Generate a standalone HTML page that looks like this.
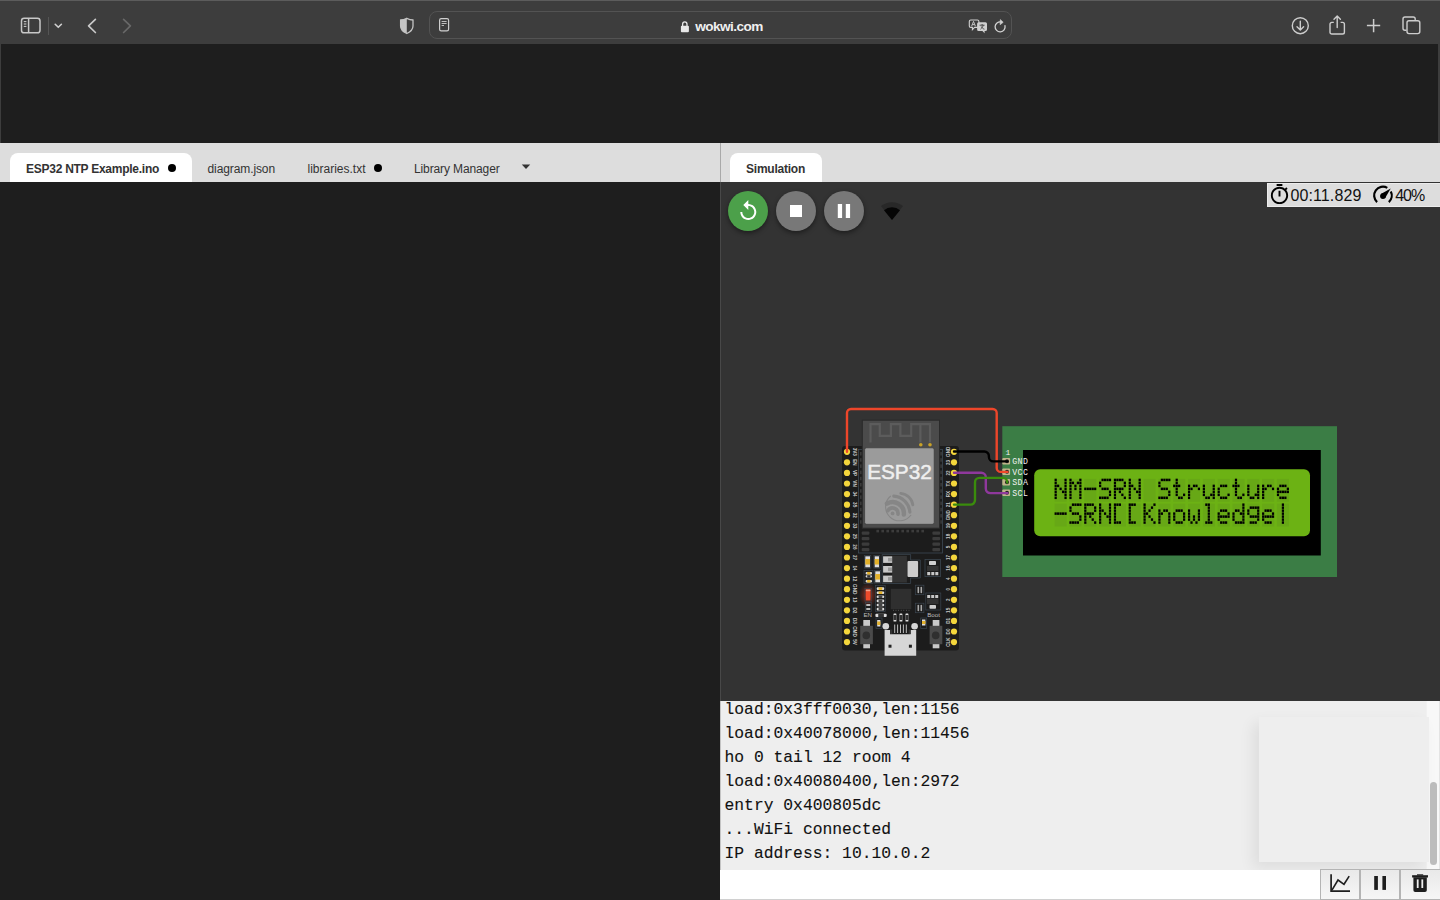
<!DOCTYPE html>
<html><head><meta charset="utf-8">
<style>
*{box-sizing:border-box;margin:0;padding:0}
html,body{width:1440px;height:900px;overflow:hidden;background:#1e1e1e;font-family:"Liberation Sans",sans-serif}
.abs{position:absolute}
#toolbar{position:absolute;left:0;top:0;width:1440px;height:44px;background:#3d3d3d}
#topline{position:absolute;left:0;top:0;width:1440px;height:1px;background:#5c5c5c}
#dark1{position:absolute;left:1px;top:44px;width:1437px;height:99px;background:#1e1e1e}
#dark1l{position:absolute;left:0;top:44px;width:1px;height:99px;background:#3d3d3d}
#dark1r{position:absolute;left:1438px;top:44px;width:2px;height:99px;background:#3d3d3d}
#tabbar{position:absolute;left:0;top:143px;width:1440px;height:39px;background:#dddddd}
.tab{position:absolute;top:10px;height:29px;background:#fff;border-radius:8px 8px 0 0}
.tt{position:absolute;font-size:12px;color:#333;white-space:nowrap;line-height:14px}
.dot{position:absolute;width:8px;height:8px;border-radius:50%;background:#000}
#editor{position:absolute;left:0;top:182px;width:720px;height:718px;background:#1e1e1e}
#sim{position:absolute;left:720px;top:182px;width:720px;height:519px;background:#333333;overflow:hidden}
#serial{position:absolute;left:720px;top:701px;width:720px;height:169px;background:#eeeeee;overflow:hidden}
#serial pre{font-family:"Liberation Mono",monospace;font-size:16.33px;line-height:24px;color:#111;-webkit-text-stroke:0.1px #111;position:absolute;left:4.5px;top:-3px}
#input{position:absolute;left:720px;top:870px;width:720px;height:30px;background:#fff}
.btn{position:absolute;top:0;width:40px;height:31px;background:linear-gradient(#e9e9e9,#f6f6f6);border:1px solid #b4b4b4}
.cb{position:absolute;width:40px;height:40px;border-radius:50%;box-shadow:0 2px 5px rgba(0,0,0,.45)}
#timer{position:absolute;left:1267px;top:183px;width:173px;height:24px;background:#dddddd;border:1px solid #ececec;border-right:none}
.ticon{position:absolute}
</style></head><body>
<div id="toolbar"></div>
<div id="topline"></div>
<!-- toolbar icons -->
<svg class="abs" style="left:0;top:0" width="1440" height="44" viewBox="0 0 1440 44">
  <g fill="none" stroke="#c8c8c8" stroke-width="1.5">
    <rect x="21.5" y="18.3" width="18.5" height="14.5" rx="2.6"/>
    <line x1="28.6" y1="18.5" x2="28.6" y2="32.5"/>
  </g>
  <g stroke="#c8c8c8" stroke-width="1.1"><line x1="23.8" y1="21.6" x2="26.4" y2="21.6"/><line x1="23.8" y1="24" x2="26.4" y2="24"/><line x1="23.8" y1="26.4" x2="26.4" y2="26.4"/></g>
  <line x1="48.5" y1="17" x2="48.5" y2="35" stroke="#555" stroke-width="1"/>
  <path d="M55.2 24.3L58.3 27.3L61.4 24.3" fill="none" stroke="#d0d0d0" stroke-width="1.6" stroke-linecap="round" stroke-linejoin="round"/>
  <path d="M95.4 19.4L88.6 25.9L95.4 32.5" fill="none" stroke="#c9c9c9" stroke-width="1.7" stroke-linecap="round" stroke-linejoin="round"/>
  <path d="M123.6 19.4L130.4 25.9L123.6 32.5" fill="none" stroke="#686868" stroke-width="1.7" stroke-linecap="round" stroke-linejoin="round"/>
  <!-- shield -->
  <path d="M406.8 18.3C409 19.4 411 19.9 413 20V26C413 29.5 410.5 31.8 406.8 33.5C403 31.8 400.6 29.5 400.6 26V20C402.6 19.9 404.6 19.4 406.8 18.3Z" fill="none" stroke="#c4c4c4" stroke-width="1.3"/>
  <path d="M406.8 18.3C404.6 19.4 402.6 19.9 400.6 20V26C400.6 29.5 403 31.8 406.8 33.5Z" fill="#c4c4c4"/>
  <!-- address bar -->
  <rect x="429.5" y="11.5" width="582" height="27" rx="7.5" fill="#3d3d3d" stroke="#535353" stroke-width="1"/>
  <rect x="439.6" y="18.6" width="9" height="12.2" rx="1.6" fill="none" stroke="#cfcfcf" stroke-width="1.2"/>
  <g stroke="#cfcfcf" stroke-width="0.9"><line x1="441.6" y1="21.5" x2="446.6" y2="21.5"/><line x1="441.6" y1="23.5" x2="446.6" y2="23.5"/><line x1="441.6" y1="25.5" x2="444" y2="25.5"/></g>
  <!-- lock -->
  <path d="M682.6 26.3V24.2A2.2 2.4 0 0 1 687 24.2V26.3" fill="none" stroke="#e8e8e8" stroke-width="1.3"/>
  <rect x="680.9" y="25.8" width="8" height="6.4" rx="1" fill="#e8e8e8"/>
  <text x="695.3" y="31.1" font-family="Liberation Sans" font-size="13.6" font-weight="bold" fill="#f0f0f0" letter-spacing="-0.55">wokwi.com</text>
  <!-- translate -->
  <path d="M970.8 20H977.4A1.5 1.5 0 0 1 978.9 21.5V25.9A1.5 1.5 0 0 1 977.4 27.4H974.6L972.4 29.6V27.4H970.8A1.5 1.5 0 0 1 969.3 25.9V21.5A1.5 1.5 0 0 1 970.8 20Z" fill="none" stroke="#d0d0d0" stroke-width="1.1"/>
  <path d="M978.6 22.3H985.5A1.5 1.5 0 0 1 987 23.8V29.5A1.5 1.5 0 0 1 985.5 31H984.6V33.2L982.4 31H978.6A1.5 1.5 0 0 1 977.1 29.5V23.8A1.5 1.5 0 0 1 978.6 22.3Z" fill="#d0d0d0"/>
  <path d="M971.6 26.2L973.5 21.4L975.4 26.2M972.3 24.6H974.7" fill="none" stroke="#d0d0d0" stroke-width="0.9"/>
  <path d="M979.6 25.2H984.6M982.1 24V25.2M980.5 29.2C982 28 983 26.5 983.2 25.2M981.3 26.5C982 28 983 28.8 984.4 29.2" fill="none" stroke="#3d3d3d" stroke-width="0.9"/>
  <!-- reload -->
  <path d="M1000.97 21.88A5 5 0 1 0 1004.99 25.76" fill="none" stroke="#d2d2d2" stroke-width="1.3" stroke-linecap="round"/>
  <path d="M1000.3 19.6L1003.2 22.3L1000.1 24.7Z" fill="#d2d2d2" stroke="#d2d2d2" stroke-width="0.6" stroke-linejoin="round"/>
  <!-- download -->
  <circle cx="1300.3" cy="25.7" r="8" fill="none" stroke="#cdcdcd" stroke-width="1.4"/>
  <path d="M1300.3 21.3V29.8M1297 26.7L1300.3 30L1303.6 26.7" fill="none" stroke="#cdcdcd" stroke-width="1.4" stroke-linecap="round" stroke-linejoin="round"/>
  <!-- share -->
  <path d="M1333.8 22.4H1331.8A1.8 1.8 0 0 0 1330 24.2V32.2A1.8 1.8 0 0 0 1331.8 34H1342.6A1.8 1.8 0 0 0 1344.4 32.2V24.2A1.8 1.8 0 0 0 1342.6 22.4H1340.6" fill="none" stroke="#cdcdcd" stroke-width="1.4"/>
  <path d="M1337.2 16.2V27.6M1334 19.2L1337.2 16L1340.4 19.2" fill="none" stroke="#cdcdcd" stroke-width="1.4" stroke-linecap="round" stroke-linejoin="round"/>
  <!-- plus -->
  <path d="M1373.6 18.9V32.2M1366.9 25.5H1380.2" stroke="#cdcdcd" stroke-width="1.5"/>
  <!-- tabs -->
  <path d="M1406.5 30.2H1405A2 2 0 0 1 1403 28.2V19A2 2 0 0 1 1405 17H1413.2A2 2 0 0 1 1415.2 19V20.5" fill="none" stroke="#cdcdcd" stroke-width="1.4"/>
  <rect x="1407" y="20.8" width="12.8" height="12.8" rx="2" fill="none" stroke="#cdcdcd" stroke-width="1.4"/>
</svg>
<div id="dark1"></div><div id="dark1l"></div><div id="dark1r"></div>
<div id="tabbar">
  <div class="tab" style="left:10px;width:182px"></div>
  <div class="tt" style="left:26px;top:19px;font-weight:bold;letter-spacing:-0.26px">ESP32 NTP Example.ino</div>
  <div class="dot" style="left:168px;top:21px"></div>
  <div class="tt" style="left:207.5px;top:19px;letter-spacing:-0.1px">diagram.json</div>
  <div class="tt" style="left:307.5px;top:19px">libraries.txt</div>
  <div class="dot" style="left:374px;top:21px"></div>
  <div class="tt" style="left:414px;top:19px;letter-spacing:-0.12px">Library Manager</div>
  <svg class="abs" style="left:520px;top:20px" width="12" height="8"><path d="M1.8 1.5H10.2L6 6Z" fill="#333"/></svg>
  <div class="abs" style="left:720px;top:0;width:1px;height:39px;background:#a9a9a9"></div>
  <div class="tab" style="left:730px;width:92px"></div>
  <div class="tt" style="left:746px;top:19px;font-weight:bold;letter-spacing:-0.23px">Simulation</div>
</div>
<div id="editor"></div>
<div id="sim">
  <div class="abs" style="left:0;top:0;width:1px;height:519px;background:#484848"></div>
  <div class="cb" style="left:8px;top:9px;background:#4ca04a"></div>
  <div class="cb" style="left:56px;top:9px;background:#787878"></div>
  <div class="cb" style="left:104px;top:9px;background:#787878"></div>
</div>
<svg class="abs" style="left:0;top:0" width="1440" height="900" viewBox="0 0 1440 900">
  <defs><radialGradient id="glow"><stop offset="0" stop-color="#ff3a1a" stop-opacity="0.75"/><stop offset="0.55" stop-color="#ff3a1a" stop-opacity="0.25"/><stop offset="1" stop-color="#ff3a1a" stop-opacity="0"/></radialGradient></defs>
  <!-- restart icon -->
  <g transform="translate(736 199)"><path d="M12 5V1L7 6l5 5V7c3.31 0 6 2.69 6 6s-2.69 6-6 6-6-2.69-6-6H4c0 4.42 3.58 8 8 8s8-3.58 8-8-3.58-8-8-8z" fill="#fff" transform="translate(0.3 0) scale(1)"/></g>
  <rect x="790" y="205" width="12" height="12" fill="#fff"/>
  <rect x="837.8" y="204" width="4.3" height="14" fill="#fff"/>
  <rect x="845.8" y="204" width="4.3" height="14" fill="#fff"/>
  <!-- wifi -->
  <path d="M881 206A17.8 17.8 0 0 1 903 206L892 220Z" fill="#282828"/>
  <path d="M884 210.3A11.9 11.9 0 0 1 900 210.3L892 220Z" fill="#050505"/>
  <rect x="842" y="446" width="117" height="204.5" rx="3" fill="#1c1c1c"/>
<rect x="858.5" y="449.5" width="84" height="103.5" fill="none" stroke="#3d4a55" stroke-width="0.8"/>
<rect x="862.3" y="420.2" width="77.2" height="108" fill="#4b4b4b" stroke="#2a2a2a" stroke-width="1"/>
<path d="M870.5 442.5V424.2H879.8V435.9H890.9V424.2H900.4V435.9H911.2V424.2H930V442.5M920.4 424.2V442.5" fill="none" stroke="#5c5c5c" stroke-width="2.2"/>
<circle cx="920.8" cy="444.7" r="1.8" fill="#c9a227"/><circle cx="930" cy="444.7" r="1.8" fill="#c9a227"/>
<rect x="860" y="452.0" width="1.6" height="3.5" fill="#3a3a3a"/>
<rect x="940.3" y="452.0" width="1.6" height="3.5" fill="#3a3a3a"/>
<rect x="860" y="458.2" width="1.6" height="3.5" fill="#3a3a3a"/>
<rect x="940.3" y="458.2" width="1.6" height="3.5" fill="#3a3a3a"/>
<rect x="860" y="464.4" width="1.6" height="3.5" fill="#3a3a3a"/>
<rect x="940.3" y="464.4" width="1.6" height="3.5" fill="#3a3a3a"/>
<rect x="860" y="470.6" width="1.6" height="3.5" fill="#3a3a3a"/>
<rect x="940.3" y="470.6" width="1.6" height="3.5" fill="#3a3a3a"/>
<rect x="860" y="476.8" width="1.6" height="3.5" fill="#3a3a3a"/>
<rect x="940.3" y="476.8" width="1.6" height="3.5" fill="#3a3a3a"/>
<rect x="860" y="483.0" width="1.6" height="3.5" fill="#3a3a3a"/>
<rect x="940.3" y="483.0" width="1.6" height="3.5" fill="#3a3a3a"/>
<rect x="860" y="489.2" width="1.6" height="3.5" fill="#3a3a3a"/>
<rect x="940.3" y="489.2" width="1.6" height="3.5" fill="#3a3a3a"/>
<rect x="860" y="495.4" width="1.6" height="3.5" fill="#3a3a3a"/>
<rect x="940.3" y="495.4" width="1.6" height="3.5" fill="#3a3a3a"/>
<rect x="860" y="501.6" width="1.6" height="3.5" fill="#3a3a3a"/>
<rect x="940.3" y="501.6" width="1.6" height="3.5" fill="#3a3a3a"/>
<rect x="860" y="507.8" width="1.6" height="3.5" fill="#3a3a3a"/>
<rect x="940.3" y="507.8" width="1.6" height="3.5" fill="#3a3a3a"/>
<rect x="860" y="514.0" width="1.6" height="3.5" fill="#3a3a3a"/>
<rect x="940.3" y="514.0" width="1.6" height="3.5" fill="#3a3a3a"/>
<rect x="860" y="520.2" width="1.6" height="3.5" fill="#3a3a3a"/>
<rect x="940.3" y="520.2" width="1.6" height="3.5" fill="#3a3a3a"/>
<rect x="864.6" y="447.8" width="69.6" height="76.5" rx="2" fill="#9b9b9b" stroke="#3a3a3a" stroke-width="0.7"/>
<text x="899.5" y="479.3" font-family="Liberation Sans" font-size="20.8" fill="#efefef" stroke="#efefef" stroke-width="0.5" text-anchor="middle">ESP32</text>
<path d="M910.78 515.23A14.0 14.0 0 1 1 890.42 496.23" fill="none" stroke="#868686" stroke-width="1.1" stroke-linecap="round"/>
<path d="M900.77 493.45A13.4 13.4 0 0 1 912.87 504.94" fill="none" stroke="#868686" stroke-width="2.8" stroke-linecap="round"/>
<path d="M893.81 496.14A17.3 17.3 0 0 1 909.86 512.19" fill="none" stroke="#868686" stroke-width="3.2" stroke-linecap="round"/>
<path d="M886.95 503.61A11.3 11.3 0 0 1 903.84 514.58" fill="none" stroke="#868686" stroke-width="4.4" stroke-linecap="round"/>
<path d="M887.92 510.70A5.4 5.4 0 0 1 897.95 514.15" fill="none" stroke="#868686" stroke-width="3.6" stroke-linecap="round"/>
<circle cx="892.6" cy="513.4" r="1.9" fill="#868686"/>
<rect x="876.4" y="529.8" width="2.6" height="2.6" fill="#3c3c3c"/>
<rect x="881.4" y="529.8" width="2.6" height="2.6" fill="#3c3c3c"/>
<rect x="886.4" y="529.8" width="2.6" height="2.6" fill="#3c3c3c"/>
<rect x="891.4" y="529.8" width="2.6" height="2.6" fill="#3c3c3c"/>
<rect x="896.4" y="529.8" width="2.6" height="2.6" fill="#3c3c3c"/>
<rect x="901.4" y="529.8" width="2.6" height="2.6" fill="#3c3c3c"/>
<rect x="906.4" y="529.8" width="2.6" height="2.6" fill="#3c3c3c"/>
<rect x="911.4" y="529.8" width="2.6" height="2.6" fill="#3c3c3c"/>
<rect x="916.4" y="529.8" width="2.6" height="2.6" fill="#3c3c3c"/>
<rect x="921.4" y="529.8" width="2.6" height="2.6" fill="#3c3c3c"/>
<rect x="861.7" y="531.5" width="7.7" height="3.2" rx="1" fill="#3c3c3c"/>
<rect x="932.4" y="531.5" width="7.7" height="3.2" rx="1" fill="#3c3c3c"/>
<rect x="861.7" y="537.0" width="7.7" height="3.2" rx="1" fill="#3c3c3c"/>
<rect x="932.4" y="537.0" width="7.7" height="3.2" rx="1" fill="#3c3c3c"/>
<rect x="861.7" y="542.5" width="7.7" height="3.2" rx="1" fill="#3c3c3c"/>
<rect x="932.4" y="542.5" width="7.7" height="3.2" rx="1" fill="#3c3c3c"/>
<rect x="861.7" y="548.0" width="7.7" height="3.2" rx="1" fill="#3c3c3c"/>
<rect x="932.4" y="548.0" width="7.7" height="3.2" rx="1" fill="#3c3c3c"/>
<circle cx="847" cy="451.80" r="3.1" fill="#f4d63c"/>
<circle cx="954" cy="451.80" r="3.1" fill="#f4d63c"/>
<text transform="translate(854.2 451.80) rotate(90)" font-family="Liberation Sans" font-weight="bold" font-size="4.6" fill="#c8c8c8" text-anchor="middle" dominant-baseline="central">3V3</text>
<text transform="translate(948.3 451.80) rotate(-90)" font-family="Liberation Sans" font-weight="bold" font-size="4.6" fill="#c8c8c8" text-anchor="middle" dominant-baseline="central">GND</text>
<circle cx="847" cy="462.37" r="3.1" fill="#f4d63c"/>
<circle cx="954" cy="462.37" r="3.1" fill="#f4d63c"/>
<text transform="translate(854.2 462.37) rotate(90)" font-family="Liberation Sans" font-weight="bold" font-size="4.6" fill="#c8c8c8" text-anchor="middle" dominant-baseline="central">EN</text>
<text transform="translate(948.3 462.37) rotate(-90)" font-family="Liberation Sans" font-weight="bold" font-size="4.6" fill="#c8c8c8" text-anchor="middle" dominant-baseline="central">23</text>
<circle cx="847" cy="472.94" r="3.1" fill="#f4d63c"/>
<circle cx="954" cy="472.94" r="3.1" fill="#f4d63c"/>
<text transform="translate(854.2 472.94) rotate(90)" font-family="Liberation Sans" font-weight="bold" font-size="4.6" fill="#c8c8c8" text-anchor="middle" dominant-baseline="central">VP</text>
<text transform="translate(948.3 472.94) rotate(-90)" font-family="Liberation Sans" font-weight="bold" font-size="4.6" fill="#c8c8c8" text-anchor="middle" dominant-baseline="central">22</text>
<circle cx="847" cy="483.51" r="3.1" fill="#f4d63c"/>
<circle cx="954" cy="483.51" r="3.1" fill="#f4d63c"/>
<text transform="translate(854.2 483.51) rotate(90)" font-family="Liberation Sans" font-weight="bold" font-size="4.6" fill="#c8c8c8" text-anchor="middle" dominant-baseline="central">VN</text>
<text transform="translate(948.3 483.51) rotate(-90)" font-family="Liberation Sans" font-weight="bold" font-size="4.6" fill="#c8c8c8" text-anchor="middle" dominant-baseline="central">TX</text>
<circle cx="847" cy="494.08" r="3.1" fill="#f4d63c"/>
<circle cx="954" cy="494.08" r="3.1" fill="#f4d63c"/>
<text transform="translate(854.2 494.08) rotate(90)" font-family="Liberation Sans" font-weight="bold" font-size="4.6" fill="#c8c8c8" text-anchor="middle" dominant-baseline="central">34</text>
<text transform="translate(948.3 494.08) rotate(-90)" font-family="Liberation Sans" font-weight="bold" font-size="4.6" fill="#c8c8c8" text-anchor="middle" dominant-baseline="central">RX</text>
<circle cx="847" cy="504.65" r="3.1" fill="#f4d63c"/>
<circle cx="954" cy="504.65" r="3.1" fill="#f4d63c"/>
<text transform="translate(854.2 504.65) rotate(90)" font-family="Liberation Sans" font-weight="bold" font-size="4.6" fill="#c8c8c8" text-anchor="middle" dominant-baseline="central">35</text>
<text transform="translate(948.3 504.65) rotate(-90)" font-family="Liberation Sans" font-weight="bold" font-size="4.6" fill="#c8c8c8" text-anchor="middle" dominant-baseline="central">21</text>
<circle cx="847" cy="515.22" r="3.1" fill="#f4d63c"/>
<circle cx="954" cy="515.22" r="3.1" fill="#f4d63c"/>
<text transform="translate(854.2 515.22) rotate(90)" font-family="Liberation Sans" font-weight="bold" font-size="4.6" fill="#c8c8c8" text-anchor="middle" dominant-baseline="central">32</text>
<text transform="translate(948.3 515.22) rotate(-90)" font-family="Liberation Sans" font-weight="bold" font-size="4.6" fill="#c8c8c8" text-anchor="middle" dominant-baseline="central">GND</text>
<circle cx="847" cy="525.79" r="3.1" fill="#f4d63c"/>
<circle cx="954" cy="525.79" r="3.1" fill="#f4d63c"/>
<text transform="translate(854.2 525.79) rotate(90)" font-family="Liberation Sans" font-weight="bold" font-size="4.6" fill="#c8c8c8" text-anchor="middle" dominant-baseline="central">33</text>
<text transform="translate(948.3 525.79) rotate(-90)" font-family="Liberation Sans" font-weight="bold" font-size="4.6" fill="#c8c8c8" text-anchor="middle" dominant-baseline="central">19</text>
<circle cx="847" cy="536.36" r="3.1" fill="#f4d63c"/>
<circle cx="954" cy="536.36" r="3.1" fill="#f4d63c"/>
<text transform="translate(854.2 536.36) rotate(90)" font-family="Liberation Sans" font-weight="bold" font-size="4.6" fill="#c8c8c8" text-anchor="middle" dominant-baseline="central">25</text>
<text transform="translate(948.3 536.36) rotate(-90)" font-family="Liberation Sans" font-weight="bold" font-size="4.6" fill="#c8c8c8" text-anchor="middle" dominant-baseline="central">18</text>
<circle cx="847" cy="546.93" r="3.1" fill="#f4d63c"/>
<circle cx="954" cy="546.93" r="3.1" fill="#f4d63c"/>
<text transform="translate(854.2 546.93) rotate(90)" font-family="Liberation Sans" font-weight="bold" font-size="4.6" fill="#c8c8c8" text-anchor="middle" dominant-baseline="central">26</text>
<text transform="translate(948.3 546.93) rotate(-90)" font-family="Liberation Sans" font-weight="bold" font-size="4.6" fill="#c8c8c8" text-anchor="middle" dominant-baseline="central">5</text>
<circle cx="847" cy="557.50" r="3.1" fill="#f4d63c"/>
<circle cx="954" cy="557.50" r="3.1" fill="#f4d63c"/>
<text transform="translate(854.2 557.50) rotate(90)" font-family="Liberation Sans" font-weight="bold" font-size="4.6" fill="#c8c8c8" text-anchor="middle" dominant-baseline="central">27</text>
<text transform="translate(948.3 557.50) rotate(-90)" font-family="Liberation Sans" font-weight="bold" font-size="4.6" fill="#c8c8c8" text-anchor="middle" dominant-baseline="central">17</text>
<circle cx="847" cy="568.07" r="3.1" fill="#f4d63c"/>
<circle cx="954" cy="568.07" r="3.1" fill="#f4d63c"/>
<text transform="translate(854.2 568.07) rotate(90)" font-family="Liberation Sans" font-weight="bold" font-size="4.6" fill="#c8c8c8" text-anchor="middle" dominant-baseline="central">14</text>
<text transform="translate(948.3 568.07) rotate(-90)" font-family="Liberation Sans" font-weight="bold" font-size="4.6" fill="#c8c8c8" text-anchor="middle" dominant-baseline="central">16</text>
<circle cx="847" cy="578.64" r="3.1" fill="#f4d63c"/>
<circle cx="954" cy="578.64" r="3.1" fill="#f4d63c"/>
<text transform="translate(854.2 578.64) rotate(90)" font-family="Liberation Sans" font-weight="bold" font-size="4.6" fill="#c8c8c8" text-anchor="middle" dominant-baseline="central">12</text>
<text transform="translate(948.3 578.64) rotate(-90)" font-family="Liberation Sans" font-weight="bold" font-size="4.6" fill="#c8c8c8" text-anchor="middle" dominant-baseline="central">4</text>
<circle cx="847" cy="589.21" r="3.1" fill="#f4d63c"/>
<circle cx="954" cy="589.21" r="3.1" fill="#f4d63c"/>
<text transform="translate(854.2 589.21) rotate(90)" font-family="Liberation Sans" font-weight="bold" font-size="4.6" fill="#c8c8c8" text-anchor="middle" dominant-baseline="central">GND</text>
<text transform="translate(948.3 589.21) rotate(-90)" font-family="Liberation Sans" font-weight="bold" font-size="4.6" fill="#c8c8c8" text-anchor="middle" dominant-baseline="central">0</text>
<circle cx="847" cy="599.78" r="3.1" fill="#f4d63c"/>
<circle cx="954" cy="599.78" r="3.1" fill="#f4d63c"/>
<text transform="translate(854.2 599.78) rotate(90)" font-family="Liberation Sans" font-weight="bold" font-size="4.6" fill="#c8c8c8" text-anchor="middle" dominant-baseline="central">13</text>
<text transform="translate(948.3 599.78) rotate(-90)" font-family="Liberation Sans" font-weight="bold" font-size="4.6" fill="#c8c8c8" text-anchor="middle" dominant-baseline="central">2</text>
<circle cx="847" cy="610.35" r="3.1" fill="#f4d63c"/>
<circle cx="954" cy="610.35" r="3.1" fill="#f4d63c"/>
<text transform="translate(854.2 610.35) rotate(90)" font-family="Liberation Sans" font-weight="bold" font-size="4.6" fill="#c8c8c8" text-anchor="middle" dominant-baseline="central">D2</text>
<text transform="translate(948.3 610.35) rotate(-90)" font-family="Liberation Sans" font-weight="bold" font-size="4.6" fill="#c8c8c8" text-anchor="middle" dominant-baseline="central">15</text>
<circle cx="847" cy="620.92" r="3.1" fill="#f4d63c"/>
<circle cx="954" cy="620.92" r="3.1" fill="#f4d63c"/>
<text transform="translate(854.2 620.92) rotate(90)" font-family="Liberation Sans" font-weight="bold" font-size="4.6" fill="#c8c8c8" text-anchor="middle" dominant-baseline="central">D3</text>
<text transform="translate(948.3 620.92) rotate(-90)" font-family="Liberation Sans" font-weight="bold" font-size="4.6" fill="#c8c8c8" text-anchor="middle" dominant-baseline="central">D1</text>
<circle cx="847" cy="631.49" r="3.1" fill="#f4d63c"/>
<circle cx="954" cy="631.49" r="3.1" fill="#f4d63c"/>
<text transform="translate(854.2 631.49) rotate(90)" font-family="Liberation Sans" font-weight="bold" font-size="4.6" fill="#c8c8c8" text-anchor="middle" dominant-baseline="central">CMD</text>
<text transform="translate(948.3 631.49) rotate(-90)" font-family="Liberation Sans" font-weight="bold" font-size="4.6" fill="#c8c8c8" text-anchor="middle" dominant-baseline="central">D0</text>
<circle cx="847" cy="642.06" r="3.1" fill="#f4d63c"/>
<circle cx="954" cy="642.06" r="3.1" fill="#f4d63c"/>
<text transform="translate(854.2 642.06) rotate(90)" font-family="Liberation Sans" font-weight="bold" font-size="4.6" fill="#c8c8c8" text-anchor="middle" dominant-baseline="central">5V</text>
<text transform="translate(948.3 642.06) rotate(-90)" font-family="Liberation Sans" font-weight="bold" font-size="4.6" fill="#c8c8c8" text-anchor="middle" dominant-baseline="central">CLK</text>
<rect x="864.5" y="555.5" width="6.300000000000001" height="12.6" fill="none" stroke="#3b4650" stroke-width="0.7"/>
<rect x="865.3" y="556.3" width="4.7" height="11" fill="#ddd"/>
<rect x="865.3" y="559.05" width="4.7" height="5.5" fill="#e3b12a"/>
<rect x="873.9000000000001" y="555.5" width="5.9" height="12.6" fill="none" stroke="#3b4650" stroke-width="0.7"/>
<rect x="874.7" y="556.3" width="4.3" height="11" fill="#ddd"/>
<rect x="874.7" y="559.05" width="4.3" height="5.5" fill="#e3b12a"/>
<rect x="874.5" y="570.5" width="6.300000000000001" height="12.6" fill="none" stroke="#3b4650" stroke-width="0.7"/>
<rect x="875.3" y="571.3" width="4.7" height="11" fill="#ddd"/>
<rect x="875.3" y="574.05" width="4.7" height="5.5" fill="#e3b12a"/>
<rect x="864" y="570.5" width="9" height="13" fill="none" stroke="#3b4650" stroke-width="0.7"/>
<rect x="865.6" y="571.9" width="6.4" height="2.6" rx="1" fill="#ddd"/>
<rect x="867.2" y="571.9" width="3.2" height="2.6" fill="#e3b12a"/>
<rect x="865.6" y="575.2" width="6.4" height="2.4" rx="1" fill="#ddd"/>
<rect x="867.2" y="575.2" width="3.2" height="2.4" fill="#333"/>
<rect x="865.6" y="579.9" width="6.4" height="2.6" rx="1" fill="#ddd"/>
<rect x="867.2" y="579.9" width="3.2" height="2.6" fill="#e3b12a"/>
<path d="M882.2 554.4H910.6V560H920.3V578H910.6V583.5H882.2Z" fill="none" stroke="#3b4650" stroke-width="0.8"/>
<rect x="892.2" y="555.9" width="14.7" height="26.6" fill="#333"/>
<rect x="883.1" y="556.3" width="9.1" height="6.6" fill="#c8c8c8"/><rect x="888" y="557.8" width="4" height="3.6" fill="#9a9a9a"/>
<rect x="883.1" y="566" width="9.1" height="6.6" fill="#c8c8c8"/><rect x="888" y="567.5" width="4" height="3.6" fill="#9a9a9a"/>
<rect x="883.1" y="575.6" width="9.1" height="6.6" fill="#c8c8c8"/><rect x="888" y="577.1" width="4" height="3.6" fill="#9a9a9a"/>
<rect x="907.5" y="561" width="10.6" height="16" rx="1" fill="#cdcdcd"/>
<rect x="925" y="559.4" width="15.6" height="17.2" fill="none" stroke="#3b4650" stroke-width="0.8"/>
<rect x="929" y="561" width="7" height="4" rx="0.8" fill="#cfcfcf"/><rect x="927" y="566" width="11.5" height="5" fill="#333"/>
<rect x="927.2" y="572" width="3" height="3.2" fill="#c8c8c8"/>
<rect x="931.3" y="572" width="3" height="3.2" fill="#c8c8c8"/>
<rect x="935.3" y="572" width="3" height="3.2" fill="#c8c8c8"/>
<rect x="859" y="583" width="18" height="24" fill="url(#glow)"/>
<rect x="864.9" y="588.6" width="6.4" height="12.5" fill="none" stroke="#3b4650" stroke-width="0.7"/>
<rect x="865.8" y="589.6" width="4.6" height="10.8" fill="#ee4b2b"/><rect x="865.8" y="589.6" width="4.6" height="1.6" fill="#f6a08a"/>
<rect x="865.3" y="602.5" width="6" height="9" fill="none" stroke="#3b4650" stroke-width="0.7"/>
<rect x="866.3" y="604" width="4" height="2" fill="#bbb"/><rect x="866.3" y="608" width="4" height="2" fill="#bbb"/>
<rect x="875.4" y="585.5" width="9.8" height="26" fill="none" stroke="#3b4650" stroke-width="0.7"/>
<rect x="876.7" y="587.3" width="7.5" height="2.6" rx="1" fill="#ddd"/>
<rect x="878.575" y="587.3" width="3.75" height="2.6" fill="#e3b12a"/>
<rect x="876.7" y="591.4" width="7.5" height="2.6" rx="1" fill="#ddd"/>
<rect x="878.575" y="591.4" width="3.75" height="2.6" fill="#e3b12a"/>
<rect x="876.7" y="595.5" width="7.5" height="2.6" rx="1" fill="#ddd"/>
<rect x="878.575" y="595.5" width="3.75" height="2.6" fill="#444"/>
<rect x="876.7" y="599.5999999999999" width="7.5" height="2.6" rx="1" fill="#ddd"/>
<rect x="878.575" y="599.5999999999999" width="3.75" height="2.6" fill="#444"/>
<rect x="876.7" y="603.6999999999999" width="7.5" height="2.6" rx="1" fill="#ddd"/>
<rect x="878.575" y="603.6999999999999" width="3.75" height="2.6" fill="#444"/>
<rect x="876.7" y="607.8" width="7.5" height="2.6" rx="1" fill="#ddd"/>
<rect x="878.575" y="607.8" width="3.75" height="2.6" fill="#444"/>
<rect x="890.8" y="588.8" width="20.5" height="20.4" fill="#2f2f2f"/>
<rect x="893.0" y="609.8" width="0.8" height="1.2" fill="#555"/>
<rect x="895.6" y="609.8" width="0.8" height="1.2" fill="#555"/>
<rect x="898.2" y="609.8" width="0.8" height="1.2" fill="#555"/>
<rect x="900.8" y="609.8" width="0.8" height="1.2" fill="#555"/>
<rect x="903.4" y="609.8" width="0.8" height="1.2" fill="#555"/>
<rect x="906.0" y="609.8" width="0.8" height="1.2" fill="#555"/>
<rect x="908.6" y="609.8" width="0.8" height="1.2" fill="#555"/>
<rect x="893.5" y="613.5" width="2.9" height="8" rx="0.6" fill="#ddd"/><rect x="893.5" y="615" width="2.9" height="5" fill="#333"/>
<rect x="899.5" y="613.5" width="2.9" height="8" rx="0.6" fill="#ddd"/><rect x="899.5" y="615" width="2.9" height="5" fill="#333"/>
<rect x="905.5" y="613.5" width="2.9" height="8" rx="0.6" fill="#ddd"/><rect x="905.5" y="615" width="2.9" height="5" fill="#333"/>
<rect x="875.4" y="613.8" width="11.3" height="3.3" rx="1" fill="#ddd"/>
<rect x="878.225" y="613.8" width="5.65" height="3.3" fill="#333"/>
<rect x="876" y="618" width="6" height="10.5" fill="none" stroke="#3b4650" stroke-width="0.7"/>
<rect x="877.2" y="620" width="3.2" height="6.5" fill="#ddd"/><rect x="877.2" y="621.5" width="3.2" height="3.5" fill="#e3b12a"/>
<rect x="920.7" y="618" width="6" height="10.5" fill="none" stroke="#3b4650" stroke-width="0.7"/>
<rect x="922" y="619.5" width="3.4" height="6" fill="#ddd"/><rect x="922" y="621" width="3.4" height="3" fill="#e3b12a"/>
<rect x="915.3" y="585.2" width="8.6" height="9.5" fill="none" stroke="#3b4650" stroke-width="0.7"/>
<rect x="917.5" y="586.7" width="1.6" height="6.5" rx="0.8" fill="#aaa"/><rect x="920.5" y="586.7" width="1.6" height="6.5" rx="0.8" fill="#aaa"/>
<rect x="915.3" y="603.2" width="8.6" height="9.5" fill="none" stroke="#3b4650" stroke-width="0.7"/>
<rect x="917.5" y="604.7" width="1.6" height="6.5" rx="0.8" fill="#aaa"/><rect x="920.5" y="604.7" width="1.6" height="6.5" rx="0.8" fill="#aaa"/>
<rect x="925.8" y="593" width="15" height="17" fill="none" stroke="#3b4650" stroke-width="0.7"/>
<rect x="927.2" y="595" width="3" height="3" fill="#c8c8c8"/>
<rect x="931.2" y="595" width="3" height="3" fill="#c8c8c8"/>
<rect x="935.2" y="595" width="3" height="3" fill="#c8c8c8"/>
<rect x="927" y="598.5" width="11.5" height="5.5" fill="#333"/><rect x="929.5" y="605" width="6.5" height="3.8" rx="0.8" fill="#cfcfcf"/>
<text x="867.7" y="617.3" font-family="Liberation Sans" font-size="6.2" fill="#bdbdbd" text-anchor="middle">EN</text>
<text x="933.5" y="617.3" font-family="Liberation Sans" font-size="6.2" fill="#bdbdbd" text-anchor="middle">Boot</text>
<rect x="863.3000000000001" y="620" width="6.7" height="28.3" fill="#c9c9c9"/>
<rect x="860.2" y="625.8" width="12.7" height="18.4" fill="#4a4a4a"/>
<circle cx="866.3000000000001" cy="635.4" r="3.8" fill="#2f2f2f"/>
<rect x="932.7" y="620" width="6.7" height="28.3" fill="#c9c9c9"/>
<rect x="929.6" y="625.8" width="12.7" height="18.4" fill="#4a4a4a"/>
<circle cx="935.7" cy="635.4" r="3.8" fill="#2f2f2f"/>
<g fill="#d6d6d6"><path d="M884.6 630H890V634.2H910.6V630H916.2V655.8H884.6Z"/><circle cx="885.8" cy="626.3" r="3.3"/><circle cx="914.6" cy="626.3" r="3.3"/></g>
<rect x="888.5" y="644.7" width="3" height="3" fill="#222"/><rect x="908.9" y="644.7" width="3" height="3" fill="#222"/>
<rect x="890.2" y="629.5" width="2" height="4.5" fill="#333"/><rect x="908.6" y="629.5" width="2" height="4.5" fill="#333"/>
<rect x="894.2" y="624.5" width="1" height="8.5" fill="#bbb"/>
<rect x="897.1" y="624.5" width="1" height="8.5" fill="#bbb"/>
<rect x="900.0" y="624.5" width="1" height="8.5" fill="#bbb"/>
<rect x="902.9" y="624.5" width="1" height="8.5" fill="#bbb"/>
<rect x="905.8" y="624.5" width="1" height="8.5" fill="#bbb"/>
  <rect x="1002.3" y="426.2" width="334.7" height="150.8" fill="#3b7d45"/>
<rect x="1023" y="450" width="297.8" height="105.5" fill="#000"/>
<rect x="1034.2" y="469.2" width="275.8" height="67" rx="6" fill="#6cb214"/>
<rect x="1002.3" y="458.1" width="7.8" height="6.4" rx="1" fill="#c2b48c"/>
<circle cx="1007" cy="461.3" r="2" fill="#222"/>
<text x="1012.2" y="464.1" font-family="Liberation Mono" font-size="8.2" letter-spacing="0.5" fill="#f2f2f2">GND</text>
<rect x="1002.3" y="468.6" width="7.8" height="6.4" rx="1" fill="#c2b48c"/>
<circle cx="1007" cy="471.8" r="2" fill="#222"/>
<text x="1012.2" y="474.6" font-family="Liberation Mono" font-size="8.2" letter-spacing="0.5" fill="#f2f2f2">VCC</text>
<rect x="1002.3" y="479.1" width="7.8" height="6.4" rx="1" fill="#c2b48c"/>
<circle cx="1007" cy="482.3" r="2" fill="#222"/>
<text x="1012.2" y="485.1" font-family="Liberation Mono" font-size="8.2" letter-spacing="0.5" fill="#f2f2f2">SDA</text>
<rect x="1002.3" y="489.6" width="7.8" height="6.4" rx="1" fill="#c2b48c"/>
<circle cx="1007" cy="492.8" r="2" fill="#222"/>
<text x="1012.2" y="495.6" font-family="Liberation Mono" font-size="8.2" letter-spacing="0.5" fill="#f2f2f2">SCL</text>
<text x="1005.5" y="454.8" font-family="Liberation Mono" font-size="8" fill="#f2f2f2">1</text>
<rect x="1054.67" y="478.93" width="12" height="22.8" fill="#67a816"/>
<rect x="1069.49" y="478.93" width="12" height="22.8" fill="#67a816"/>
<rect x="1084.31" y="478.93" width="12" height="22.8" fill="#67a816"/>
<rect x="1099.13" y="478.93" width="12" height="22.8" fill="#67a816"/>
<rect x="1113.95" y="478.93" width="12" height="22.8" fill="#67a816"/>
<rect x="1128.77" y="478.93" width="12" height="22.8" fill="#67a816"/>
<rect x="1143.59" y="478.93" width="12" height="22.8" fill="#67a816"/>
<rect x="1158.41" y="478.93" width="12" height="22.8" fill="#67a816"/>
<rect x="1173.23" y="478.93" width="12" height="22.8" fill="#67a816"/>
<rect x="1188.05" y="478.93" width="12" height="22.8" fill="#67a816"/>
<rect x="1202.87" y="478.93" width="12" height="22.8" fill="#67a816"/>
<rect x="1217.69" y="478.93" width="12" height="22.8" fill="#67a816"/>
<rect x="1232.51" y="478.93" width="12" height="22.8" fill="#67a816"/>
<rect x="1247.33" y="478.93" width="12" height="22.8" fill="#67a816"/>
<rect x="1262.15" y="478.93" width="12" height="22.8" fill="#67a816"/>
<rect x="1276.97" y="478.93" width="12" height="22.8" fill="#67a816"/>
<rect x="1054.67" y="503.68" width="12" height="22.8" fill="#67a816"/>
<rect x="1069.49" y="503.68" width="12" height="22.8" fill="#67a816"/>
<rect x="1084.31" y="503.68" width="12" height="22.8" fill="#67a816"/>
<rect x="1099.13" y="503.68" width="12" height="22.8" fill="#67a816"/>
<rect x="1113.95" y="503.68" width="12" height="22.8" fill="#67a816"/>
<rect x="1128.77" y="503.68" width="12" height="22.8" fill="#67a816"/>
<rect x="1143.59" y="503.68" width="12" height="22.8" fill="#67a816"/>
<rect x="1158.41" y="503.68" width="12" height="22.8" fill="#67a816"/>
<rect x="1173.23" y="503.68" width="12" height="22.8" fill="#67a816"/>
<rect x="1188.05" y="503.68" width="12" height="22.8" fill="#67a816"/>
<rect x="1202.87" y="503.68" width="12" height="22.8" fill="#67a816"/>
<rect x="1217.69" y="503.68" width="12" height="22.8" fill="#67a816"/>
<rect x="1232.51" y="503.68" width="12" height="22.8" fill="#67a816"/>
<rect x="1247.33" y="503.68" width="12" height="22.8" fill="#67a816"/>
<rect x="1262.15" y="503.68" width="12" height="22.8" fill="#67a816"/>
<rect x="1276.97" y="503.68" width="12" height="22.8" fill="#67a816"/>
<rect x="1054.57" y="478.68" width="2.2" height="2.5" fill="#000"/>
<rect x="1064.45" y="478.68" width="2.2" height="2.5" fill="#000"/>
<rect x="1054.57" y="481.66" width="2.2" height="2.5" fill="#000"/>
<rect x="1064.45" y="481.66" width="2.2" height="2.5" fill="#000"/>
<rect x="1054.57" y="484.64" width="2.2" height="2.5" fill="#000"/>
<rect x="1057.04" y="484.64" width="2.2" height="2.5" fill="#000"/>
<rect x="1064.45" y="484.64" width="2.2" height="2.5" fill="#000"/>
<rect x="1054.57" y="487.62" width="2.2" height="2.5" fill="#000"/>
<rect x="1059.51" y="487.62" width="2.2" height="2.5" fill="#000"/>
<rect x="1064.45" y="487.62" width="2.2" height="2.5" fill="#000"/>
<rect x="1054.57" y="490.60" width="2.2" height="2.5" fill="#000"/>
<rect x="1061.98" y="490.60" width="2.2" height="2.5" fill="#000"/>
<rect x="1064.45" y="490.60" width="2.2" height="2.5" fill="#000"/>
<rect x="1054.57" y="493.58" width="2.2" height="2.5" fill="#000"/>
<rect x="1064.45" y="493.58" width="2.2" height="2.5" fill="#000"/>
<rect x="1054.57" y="496.56" width="2.2" height="2.5" fill="#000"/>
<rect x="1064.45" y="496.56" width="2.2" height="2.5" fill="#000"/>
<rect x="1069.39" y="478.68" width="2.2" height="2.5" fill="#000"/>
<rect x="1079.27" y="478.68" width="2.2" height="2.5" fill="#000"/>
<rect x="1069.39" y="481.66" width="2.2" height="2.5" fill="#000"/>
<rect x="1071.86" y="481.66" width="2.2" height="2.5" fill="#000"/>
<rect x="1076.80" y="481.66" width="2.2" height="2.5" fill="#000"/>
<rect x="1079.27" y="481.66" width="2.2" height="2.5" fill="#000"/>
<rect x="1069.39" y="484.64" width="2.2" height="2.5" fill="#000"/>
<rect x="1074.33" y="484.64" width="2.2" height="2.5" fill="#000"/>
<rect x="1079.27" y="484.64" width="2.2" height="2.5" fill="#000"/>
<rect x="1069.39" y="487.62" width="2.2" height="2.5" fill="#000"/>
<rect x="1074.33" y="487.62" width="2.2" height="2.5" fill="#000"/>
<rect x="1079.27" y="487.62" width="2.2" height="2.5" fill="#000"/>
<rect x="1069.39" y="490.60" width="2.2" height="2.5" fill="#000"/>
<rect x="1079.27" y="490.60" width="2.2" height="2.5" fill="#000"/>
<rect x="1069.39" y="493.58" width="2.2" height="2.5" fill="#000"/>
<rect x="1079.27" y="493.58" width="2.2" height="2.5" fill="#000"/>
<rect x="1069.39" y="496.56" width="2.2" height="2.5" fill="#000"/>
<rect x="1079.27" y="496.56" width="2.2" height="2.5" fill="#000"/>
<rect x="1084.21" y="487.62" width="2.2" height="2.5" fill="#000"/>
<rect x="1086.68" y="487.62" width="2.2" height="2.5" fill="#000"/>
<rect x="1089.15" y="487.62" width="2.2" height="2.5" fill="#000"/>
<rect x="1091.62" y="487.62" width="2.2" height="2.5" fill="#000"/>
<rect x="1094.09" y="487.62" width="2.2" height="2.5" fill="#000"/>
<rect x="1101.50" y="478.68" width="2.2" height="2.5" fill="#000"/>
<rect x="1103.97" y="478.68" width="2.2" height="2.5" fill="#000"/>
<rect x="1106.44" y="478.68" width="2.2" height="2.5" fill="#000"/>
<rect x="1108.91" y="478.68" width="2.2" height="2.5" fill="#000"/>
<rect x="1099.03" y="481.66" width="2.2" height="2.5" fill="#000"/>
<rect x="1099.03" y="484.64" width="2.2" height="2.5" fill="#000"/>
<rect x="1101.50" y="487.62" width="2.2" height="2.5" fill="#000"/>
<rect x="1103.97" y="487.62" width="2.2" height="2.5" fill="#000"/>
<rect x="1106.44" y="487.62" width="2.2" height="2.5" fill="#000"/>
<rect x="1108.91" y="490.60" width="2.2" height="2.5" fill="#000"/>
<rect x="1108.91" y="493.58" width="2.2" height="2.5" fill="#000"/>
<rect x="1099.03" y="496.56" width="2.2" height="2.5" fill="#000"/>
<rect x="1101.50" y="496.56" width="2.2" height="2.5" fill="#000"/>
<rect x="1103.97" y="496.56" width="2.2" height="2.5" fill="#000"/>
<rect x="1106.44" y="496.56" width="2.2" height="2.5" fill="#000"/>
<rect x="1113.85" y="478.68" width="2.2" height="2.5" fill="#000"/>
<rect x="1116.32" y="478.68" width="2.2" height="2.5" fill="#000"/>
<rect x="1118.79" y="478.68" width="2.2" height="2.5" fill="#000"/>
<rect x="1121.26" y="478.68" width="2.2" height="2.5" fill="#000"/>
<rect x="1113.85" y="481.66" width="2.2" height="2.5" fill="#000"/>
<rect x="1123.73" y="481.66" width="2.2" height="2.5" fill="#000"/>
<rect x="1113.85" y="484.64" width="2.2" height="2.5" fill="#000"/>
<rect x="1123.73" y="484.64" width="2.2" height="2.5" fill="#000"/>
<rect x="1113.85" y="487.62" width="2.2" height="2.5" fill="#000"/>
<rect x="1116.32" y="487.62" width="2.2" height="2.5" fill="#000"/>
<rect x="1118.79" y="487.62" width="2.2" height="2.5" fill="#000"/>
<rect x="1121.26" y="487.62" width="2.2" height="2.5" fill="#000"/>
<rect x="1113.85" y="490.60" width="2.2" height="2.5" fill="#000"/>
<rect x="1118.79" y="490.60" width="2.2" height="2.5" fill="#000"/>
<rect x="1113.85" y="493.58" width="2.2" height="2.5" fill="#000"/>
<rect x="1121.26" y="493.58" width="2.2" height="2.5" fill="#000"/>
<rect x="1113.85" y="496.56" width="2.2" height="2.5" fill="#000"/>
<rect x="1123.73" y="496.56" width="2.2" height="2.5" fill="#000"/>
<rect x="1128.67" y="478.68" width="2.2" height="2.5" fill="#000"/>
<rect x="1138.55" y="478.68" width="2.2" height="2.5" fill="#000"/>
<rect x="1128.67" y="481.66" width="2.2" height="2.5" fill="#000"/>
<rect x="1138.55" y="481.66" width="2.2" height="2.5" fill="#000"/>
<rect x="1128.67" y="484.64" width="2.2" height="2.5" fill="#000"/>
<rect x="1131.14" y="484.64" width="2.2" height="2.5" fill="#000"/>
<rect x="1138.55" y="484.64" width="2.2" height="2.5" fill="#000"/>
<rect x="1128.67" y="487.62" width="2.2" height="2.5" fill="#000"/>
<rect x="1133.61" y="487.62" width="2.2" height="2.5" fill="#000"/>
<rect x="1138.55" y="487.62" width="2.2" height="2.5" fill="#000"/>
<rect x="1128.67" y="490.60" width="2.2" height="2.5" fill="#000"/>
<rect x="1136.08" y="490.60" width="2.2" height="2.5" fill="#000"/>
<rect x="1138.55" y="490.60" width="2.2" height="2.5" fill="#000"/>
<rect x="1128.67" y="493.58" width="2.2" height="2.5" fill="#000"/>
<rect x="1138.55" y="493.58" width="2.2" height="2.5" fill="#000"/>
<rect x="1128.67" y="496.56" width="2.2" height="2.5" fill="#000"/>
<rect x="1138.55" y="496.56" width="2.2" height="2.5" fill="#000"/>
<rect x="1160.78" y="478.68" width="2.2" height="2.5" fill="#000"/>
<rect x="1163.25" y="478.68" width="2.2" height="2.5" fill="#000"/>
<rect x="1165.72" y="478.68" width="2.2" height="2.5" fill="#000"/>
<rect x="1168.19" y="478.68" width="2.2" height="2.5" fill="#000"/>
<rect x="1158.31" y="481.66" width="2.2" height="2.5" fill="#000"/>
<rect x="1158.31" y="484.64" width="2.2" height="2.5" fill="#000"/>
<rect x="1160.78" y="487.62" width="2.2" height="2.5" fill="#000"/>
<rect x="1163.25" y="487.62" width="2.2" height="2.5" fill="#000"/>
<rect x="1165.72" y="487.62" width="2.2" height="2.5" fill="#000"/>
<rect x="1168.19" y="490.60" width="2.2" height="2.5" fill="#000"/>
<rect x="1168.19" y="493.58" width="2.2" height="2.5" fill="#000"/>
<rect x="1158.31" y="496.56" width="2.2" height="2.5" fill="#000"/>
<rect x="1160.78" y="496.56" width="2.2" height="2.5" fill="#000"/>
<rect x="1163.25" y="496.56" width="2.2" height="2.5" fill="#000"/>
<rect x="1165.72" y="496.56" width="2.2" height="2.5" fill="#000"/>
<rect x="1175.60" y="478.68" width="2.2" height="2.5" fill="#000"/>
<rect x="1175.60" y="481.66" width="2.2" height="2.5" fill="#000"/>
<rect x="1173.13" y="484.64" width="2.2" height="2.5" fill="#000"/>
<rect x="1175.60" y="484.64" width="2.2" height="2.5" fill="#000"/>
<rect x="1178.07" y="484.64" width="2.2" height="2.5" fill="#000"/>
<rect x="1175.60" y="487.62" width="2.2" height="2.5" fill="#000"/>
<rect x="1175.60" y="490.60" width="2.2" height="2.5" fill="#000"/>
<rect x="1175.60" y="493.58" width="2.2" height="2.5" fill="#000"/>
<rect x="1183.01" y="493.58" width="2.2" height="2.5" fill="#000"/>
<rect x="1178.07" y="496.56" width="2.2" height="2.5" fill="#000"/>
<rect x="1180.54" y="496.56" width="2.2" height="2.5" fill="#000"/>
<rect x="1187.95" y="484.64" width="2.2" height="2.5" fill="#000"/>
<rect x="1192.89" y="484.64" width="2.2" height="2.5" fill="#000"/>
<rect x="1195.36" y="484.64" width="2.2" height="2.5" fill="#000"/>
<rect x="1187.95" y="487.62" width="2.2" height="2.5" fill="#000"/>
<rect x="1190.42" y="487.62" width="2.2" height="2.5" fill="#000"/>
<rect x="1197.83" y="487.62" width="2.2" height="2.5" fill="#000"/>
<rect x="1187.95" y="490.60" width="2.2" height="2.5" fill="#000"/>
<rect x="1187.95" y="493.58" width="2.2" height="2.5" fill="#000"/>
<rect x="1187.95" y="496.56" width="2.2" height="2.5" fill="#000"/>
<rect x="1202.77" y="484.64" width="2.2" height="2.5" fill="#000"/>
<rect x="1212.65" y="484.64" width="2.2" height="2.5" fill="#000"/>
<rect x="1202.77" y="487.62" width="2.2" height="2.5" fill="#000"/>
<rect x="1212.65" y="487.62" width="2.2" height="2.5" fill="#000"/>
<rect x="1202.77" y="490.60" width="2.2" height="2.5" fill="#000"/>
<rect x="1212.65" y="490.60" width="2.2" height="2.5" fill="#000"/>
<rect x="1202.77" y="493.58" width="2.2" height="2.5" fill="#000"/>
<rect x="1210.18" y="493.58" width="2.2" height="2.5" fill="#000"/>
<rect x="1212.65" y="493.58" width="2.2" height="2.5" fill="#000"/>
<rect x="1205.24" y="496.56" width="2.2" height="2.5" fill="#000"/>
<rect x="1207.71" y="496.56" width="2.2" height="2.5" fill="#000"/>
<rect x="1212.65" y="496.56" width="2.2" height="2.5" fill="#000"/>
<rect x="1220.06" y="484.64" width="2.2" height="2.5" fill="#000"/>
<rect x="1222.53" y="484.64" width="2.2" height="2.5" fill="#000"/>
<rect x="1225.00" y="484.64" width="2.2" height="2.5" fill="#000"/>
<rect x="1217.59" y="487.62" width="2.2" height="2.5" fill="#000"/>
<rect x="1217.59" y="490.60" width="2.2" height="2.5" fill="#000"/>
<rect x="1217.59" y="493.58" width="2.2" height="2.5" fill="#000"/>
<rect x="1227.47" y="493.58" width="2.2" height="2.5" fill="#000"/>
<rect x="1220.06" y="496.56" width="2.2" height="2.5" fill="#000"/>
<rect x="1222.53" y="496.56" width="2.2" height="2.5" fill="#000"/>
<rect x="1225.00" y="496.56" width="2.2" height="2.5" fill="#000"/>
<rect x="1234.88" y="478.68" width="2.2" height="2.5" fill="#000"/>
<rect x="1234.88" y="481.66" width="2.2" height="2.5" fill="#000"/>
<rect x="1232.41" y="484.64" width="2.2" height="2.5" fill="#000"/>
<rect x="1234.88" y="484.64" width="2.2" height="2.5" fill="#000"/>
<rect x="1237.35" y="484.64" width="2.2" height="2.5" fill="#000"/>
<rect x="1234.88" y="487.62" width="2.2" height="2.5" fill="#000"/>
<rect x="1234.88" y="490.60" width="2.2" height="2.5" fill="#000"/>
<rect x="1234.88" y="493.58" width="2.2" height="2.5" fill="#000"/>
<rect x="1242.29" y="493.58" width="2.2" height="2.5" fill="#000"/>
<rect x="1237.35" y="496.56" width="2.2" height="2.5" fill="#000"/>
<rect x="1239.82" y="496.56" width="2.2" height="2.5" fill="#000"/>
<rect x="1247.23" y="484.64" width="2.2" height="2.5" fill="#000"/>
<rect x="1257.11" y="484.64" width="2.2" height="2.5" fill="#000"/>
<rect x="1247.23" y="487.62" width="2.2" height="2.5" fill="#000"/>
<rect x="1257.11" y="487.62" width="2.2" height="2.5" fill="#000"/>
<rect x="1247.23" y="490.60" width="2.2" height="2.5" fill="#000"/>
<rect x="1257.11" y="490.60" width="2.2" height="2.5" fill="#000"/>
<rect x="1247.23" y="493.58" width="2.2" height="2.5" fill="#000"/>
<rect x="1254.64" y="493.58" width="2.2" height="2.5" fill="#000"/>
<rect x="1257.11" y="493.58" width="2.2" height="2.5" fill="#000"/>
<rect x="1249.70" y="496.56" width="2.2" height="2.5" fill="#000"/>
<rect x="1252.17" y="496.56" width="2.2" height="2.5" fill="#000"/>
<rect x="1257.11" y="496.56" width="2.2" height="2.5" fill="#000"/>
<rect x="1262.05" y="484.64" width="2.2" height="2.5" fill="#000"/>
<rect x="1266.99" y="484.64" width="2.2" height="2.5" fill="#000"/>
<rect x="1269.46" y="484.64" width="2.2" height="2.5" fill="#000"/>
<rect x="1262.05" y="487.62" width="2.2" height="2.5" fill="#000"/>
<rect x="1264.52" y="487.62" width="2.2" height="2.5" fill="#000"/>
<rect x="1271.93" y="487.62" width="2.2" height="2.5" fill="#000"/>
<rect x="1262.05" y="490.60" width="2.2" height="2.5" fill="#000"/>
<rect x="1262.05" y="493.58" width="2.2" height="2.5" fill="#000"/>
<rect x="1262.05" y="496.56" width="2.2" height="2.5" fill="#000"/>
<rect x="1279.34" y="484.64" width="2.2" height="2.5" fill="#000"/>
<rect x="1281.81" y="484.64" width="2.2" height="2.5" fill="#000"/>
<rect x="1284.28" y="484.64" width="2.2" height="2.5" fill="#000"/>
<rect x="1276.87" y="487.62" width="2.2" height="2.5" fill="#000"/>
<rect x="1286.75" y="487.62" width="2.2" height="2.5" fill="#000"/>
<rect x="1276.87" y="490.60" width="2.2" height="2.5" fill="#000"/>
<rect x="1279.34" y="490.60" width="2.2" height="2.5" fill="#000"/>
<rect x="1281.81" y="490.60" width="2.2" height="2.5" fill="#000"/>
<rect x="1284.28" y="490.60" width="2.2" height="2.5" fill="#000"/>
<rect x="1286.75" y="490.60" width="2.2" height="2.5" fill="#000"/>
<rect x="1276.87" y="493.58" width="2.2" height="2.5" fill="#000"/>
<rect x="1279.34" y="496.56" width="2.2" height="2.5" fill="#000"/>
<rect x="1281.81" y="496.56" width="2.2" height="2.5" fill="#000"/>
<rect x="1284.28" y="496.56" width="2.2" height="2.5" fill="#000"/>
<rect x="1054.57" y="512.37" width="2.2" height="2.5" fill="#000"/>
<rect x="1057.04" y="512.37" width="2.2" height="2.5" fill="#000"/>
<rect x="1059.51" y="512.37" width="2.2" height="2.5" fill="#000"/>
<rect x="1061.98" y="512.37" width="2.2" height="2.5" fill="#000"/>
<rect x="1064.45" y="512.37" width="2.2" height="2.5" fill="#000"/>
<rect x="1071.86" y="503.43" width="2.2" height="2.5" fill="#000"/>
<rect x="1074.33" y="503.43" width="2.2" height="2.5" fill="#000"/>
<rect x="1076.80" y="503.43" width="2.2" height="2.5" fill="#000"/>
<rect x="1079.27" y="503.43" width="2.2" height="2.5" fill="#000"/>
<rect x="1069.39" y="506.41" width="2.2" height="2.5" fill="#000"/>
<rect x="1069.39" y="509.39" width="2.2" height="2.5" fill="#000"/>
<rect x="1071.86" y="512.37" width="2.2" height="2.5" fill="#000"/>
<rect x="1074.33" y="512.37" width="2.2" height="2.5" fill="#000"/>
<rect x="1076.80" y="512.37" width="2.2" height="2.5" fill="#000"/>
<rect x="1079.27" y="515.35" width="2.2" height="2.5" fill="#000"/>
<rect x="1079.27" y="518.33" width="2.2" height="2.5" fill="#000"/>
<rect x="1069.39" y="521.31" width="2.2" height="2.5" fill="#000"/>
<rect x="1071.86" y="521.31" width="2.2" height="2.5" fill="#000"/>
<rect x="1074.33" y="521.31" width="2.2" height="2.5" fill="#000"/>
<rect x="1076.80" y="521.31" width="2.2" height="2.5" fill="#000"/>
<rect x="1084.21" y="503.43" width="2.2" height="2.5" fill="#000"/>
<rect x="1086.68" y="503.43" width="2.2" height="2.5" fill="#000"/>
<rect x="1089.15" y="503.43" width="2.2" height="2.5" fill="#000"/>
<rect x="1091.62" y="503.43" width="2.2" height="2.5" fill="#000"/>
<rect x="1084.21" y="506.41" width="2.2" height="2.5" fill="#000"/>
<rect x="1094.09" y="506.41" width="2.2" height="2.5" fill="#000"/>
<rect x="1084.21" y="509.39" width="2.2" height="2.5" fill="#000"/>
<rect x="1094.09" y="509.39" width="2.2" height="2.5" fill="#000"/>
<rect x="1084.21" y="512.37" width="2.2" height="2.5" fill="#000"/>
<rect x="1086.68" y="512.37" width="2.2" height="2.5" fill="#000"/>
<rect x="1089.15" y="512.37" width="2.2" height="2.5" fill="#000"/>
<rect x="1091.62" y="512.37" width="2.2" height="2.5" fill="#000"/>
<rect x="1084.21" y="515.35" width="2.2" height="2.5" fill="#000"/>
<rect x="1089.15" y="515.35" width="2.2" height="2.5" fill="#000"/>
<rect x="1084.21" y="518.33" width="2.2" height="2.5" fill="#000"/>
<rect x="1091.62" y="518.33" width="2.2" height="2.5" fill="#000"/>
<rect x="1084.21" y="521.31" width="2.2" height="2.5" fill="#000"/>
<rect x="1094.09" y="521.31" width="2.2" height="2.5" fill="#000"/>
<rect x="1099.03" y="503.43" width="2.2" height="2.5" fill="#000"/>
<rect x="1108.91" y="503.43" width="2.2" height="2.5" fill="#000"/>
<rect x="1099.03" y="506.41" width="2.2" height="2.5" fill="#000"/>
<rect x="1108.91" y="506.41" width="2.2" height="2.5" fill="#000"/>
<rect x="1099.03" y="509.39" width="2.2" height="2.5" fill="#000"/>
<rect x="1101.50" y="509.39" width="2.2" height="2.5" fill="#000"/>
<rect x="1108.91" y="509.39" width="2.2" height="2.5" fill="#000"/>
<rect x="1099.03" y="512.37" width="2.2" height="2.5" fill="#000"/>
<rect x="1103.97" y="512.37" width="2.2" height="2.5" fill="#000"/>
<rect x="1108.91" y="512.37" width="2.2" height="2.5" fill="#000"/>
<rect x="1099.03" y="515.35" width="2.2" height="2.5" fill="#000"/>
<rect x="1106.44" y="515.35" width="2.2" height="2.5" fill="#000"/>
<rect x="1108.91" y="515.35" width="2.2" height="2.5" fill="#000"/>
<rect x="1099.03" y="518.33" width="2.2" height="2.5" fill="#000"/>
<rect x="1108.91" y="518.33" width="2.2" height="2.5" fill="#000"/>
<rect x="1099.03" y="521.31" width="2.2" height="2.5" fill="#000"/>
<rect x="1108.91" y="521.31" width="2.2" height="2.5" fill="#000"/>
<rect x="1113.85" y="503.43" width="2.2" height="2.5" fill="#000"/>
<rect x="1116.32" y="503.43" width="2.2" height="2.5" fill="#000"/>
<rect x="1118.79" y="503.43" width="2.2" height="2.5" fill="#000"/>
<rect x="1113.85" y="506.41" width="2.2" height="2.5" fill="#000"/>
<rect x="1113.85" y="509.39" width="2.2" height="2.5" fill="#000"/>
<rect x="1113.85" y="512.37" width="2.2" height="2.5" fill="#000"/>
<rect x="1113.85" y="515.35" width="2.2" height="2.5" fill="#000"/>
<rect x="1113.85" y="518.33" width="2.2" height="2.5" fill="#000"/>
<rect x="1113.85" y="521.31" width="2.2" height="2.5" fill="#000"/>
<rect x="1116.32" y="521.31" width="2.2" height="2.5" fill="#000"/>
<rect x="1118.79" y="521.31" width="2.2" height="2.5" fill="#000"/>
<rect x="1128.67" y="503.43" width="2.2" height="2.5" fill="#000"/>
<rect x="1131.14" y="503.43" width="2.2" height="2.5" fill="#000"/>
<rect x="1133.61" y="503.43" width="2.2" height="2.5" fill="#000"/>
<rect x="1128.67" y="506.41" width="2.2" height="2.5" fill="#000"/>
<rect x="1128.67" y="509.39" width="2.2" height="2.5" fill="#000"/>
<rect x="1128.67" y="512.37" width="2.2" height="2.5" fill="#000"/>
<rect x="1128.67" y="515.35" width="2.2" height="2.5" fill="#000"/>
<rect x="1128.67" y="518.33" width="2.2" height="2.5" fill="#000"/>
<rect x="1128.67" y="521.31" width="2.2" height="2.5" fill="#000"/>
<rect x="1131.14" y="521.31" width="2.2" height="2.5" fill="#000"/>
<rect x="1133.61" y="521.31" width="2.2" height="2.5" fill="#000"/>
<rect x="1143.49" y="503.43" width="2.2" height="2.5" fill="#000"/>
<rect x="1153.37" y="503.43" width="2.2" height="2.5" fill="#000"/>
<rect x="1143.49" y="506.41" width="2.2" height="2.5" fill="#000"/>
<rect x="1150.90" y="506.41" width="2.2" height="2.5" fill="#000"/>
<rect x="1143.49" y="509.39" width="2.2" height="2.5" fill="#000"/>
<rect x="1148.43" y="509.39" width="2.2" height="2.5" fill="#000"/>
<rect x="1143.49" y="512.37" width="2.2" height="2.5" fill="#000"/>
<rect x="1145.96" y="512.37" width="2.2" height="2.5" fill="#000"/>
<rect x="1143.49" y="515.35" width="2.2" height="2.5" fill="#000"/>
<rect x="1148.43" y="515.35" width="2.2" height="2.5" fill="#000"/>
<rect x="1143.49" y="518.33" width="2.2" height="2.5" fill="#000"/>
<rect x="1150.90" y="518.33" width="2.2" height="2.5" fill="#000"/>
<rect x="1143.49" y="521.31" width="2.2" height="2.5" fill="#000"/>
<rect x="1153.37" y="521.31" width="2.2" height="2.5" fill="#000"/>
<rect x="1158.31" y="509.39" width="2.2" height="2.5" fill="#000"/>
<rect x="1163.25" y="509.39" width="2.2" height="2.5" fill="#000"/>
<rect x="1165.72" y="509.39" width="2.2" height="2.5" fill="#000"/>
<rect x="1158.31" y="512.37" width="2.2" height="2.5" fill="#000"/>
<rect x="1160.78" y="512.37" width="2.2" height="2.5" fill="#000"/>
<rect x="1168.19" y="512.37" width="2.2" height="2.5" fill="#000"/>
<rect x="1158.31" y="515.35" width="2.2" height="2.5" fill="#000"/>
<rect x="1168.19" y="515.35" width="2.2" height="2.5" fill="#000"/>
<rect x="1158.31" y="518.33" width="2.2" height="2.5" fill="#000"/>
<rect x="1168.19" y="518.33" width="2.2" height="2.5" fill="#000"/>
<rect x="1158.31" y="521.31" width="2.2" height="2.5" fill="#000"/>
<rect x="1168.19" y="521.31" width="2.2" height="2.5" fill="#000"/>
<rect x="1175.60" y="509.39" width="2.2" height="2.5" fill="#000"/>
<rect x="1178.07" y="509.39" width="2.2" height="2.5" fill="#000"/>
<rect x="1180.54" y="509.39" width="2.2" height="2.5" fill="#000"/>
<rect x="1173.13" y="512.37" width="2.2" height="2.5" fill="#000"/>
<rect x="1183.01" y="512.37" width="2.2" height="2.5" fill="#000"/>
<rect x="1173.13" y="515.35" width="2.2" height="2.5" fill="#000"/>
<rect x="1183.01" y="515.35" width="2.2" height="2.5" fill="#000"/>
<rect x="1173.13" y="518.33" width="2.2" height="2.5" fill="#000"/>
<rect x="1183.01" y="518.33" width="2.2" height="2.5" fill="#000"/>
<rect x="1175.60" y="521.31" width="2.2" height="2.5" fill="#000"/>
<rect x="1178.07" y="521.31" width="2.2" height="2.5" fill="#000"/>
<rect x="1180.54" y="521.31" width="2.2" height="2.5" fill="#000"/>
<rect x="1187.95" y="509.39" width="2.2" height="2.5" fill="#000"/>
<rect x="1197.83" y="509.39" width="2.2" height="2.5" fill="#000"/>
<rect x="1187.95" y="512.37" width="2.2" height="2.5" fill="#000"/>
<rect x="1197.83" y="512.37" width="2.2" height="2.5" fill="#000"/>
<rect x="1187.95" y="515.35" width="2.2" height="2.5" fill="#000"/>
<rect x="1192.89" y="515.35" width="2.2" height="2.5" fill="#000"/>
<rect x="1197.83" y="515.35" width="2.2" height="2.5" fill="#000"/>
<rect x="1187.95" y="518.33" width="2.2" height="2.5" fill="#000"/>
<rect x="1192.89" y="518.33" width="2.2" height="2.5" fill="#000"/>
<rect x="1197.83" y="518.33" width="2.2" height="2.5" fill="#000"/>
<rect x="1190.42" y="521.31" width="2.2" height="2.5" fill="#000"/>
<rect x="1195.36" y="521.31" width="2.2" height="2.5" fill="#000"/>
<rect x="1205.24" y="503.43" width="2.2" height="2.5" fill="#000"/>
<rect x="1207.71" y="503.43" width="2.2" height="2.5" fill="#000"/>
<rect x="1207.71" y="506.41" width="2.2" height="2.5" fill="#000"/>
<rect x="1207.71" y="509.39" width="2.2" height="2.5" fill="#000"/>
<rect x="1207.71" y="512.37" width="2.2" height="2.5" fill="#000"/>
<rect x="1207.71" y="515.35" width="2.2" height="2.5" fill="#000"/>
<rect x="1207.71" y="518.33" width="2.2" height="2.5" fill="#000"/>
<rect x="1205.24" y="521.31" width="2.2" height="2.5" fill="#000"/>
<rect x="1207.71" y="521.31" width="2.2" height="2.5" fill="#000"/>
<rect x="1210.18" y="521.31" width="2.2" height="2.5" fill="#000"/>
<rect x="1220.06" y="509.39" width="2.2" height="2.5" fill="#000"/>
<rect x="1222.53" y="509.39" width="2.2" height="2.5" fill="#000"/>
<rect x="1225.00" y="509.39" width="2.2" height="2.5" fill="#000"/>
<rect x="1217.59" y="512.37" width="2.2" height="2.5" fill="#000"/>
<rect x="1227.47" y="512.37" width="2.2" height="2.5" fill="#000"/>
<rect x="1217.59" y="515.35" width="2.2" height="2.5" fill="#000"/>
<rect x="1220.06" y="515.35" width="2.2" height="2.5" fill="#000"/>
<rect x="1222.53" y="515.35" width="2.2" height="2.5" fill="#000"/>
<rect x="1225.00" y="515.35" width="2.2" height="2.5" fill="#000"/>
<rect x="1227.47" y="515.35" width="2.2" height="2.5" fill="#000"/>
<rect x="1217.59" y="518.33" width="2.2" height="2.5" fill="#000"/>
<rect x="1220.06" y="521.31" width="2.2" height="2.5" fill="#000"/>
<rect x="1222.53" y="521.31" width="2.2" height="2.5" fill="#000"/>
<rect x="1225.00" y="521.31" width="2.2" height="2.5" fill="#000"/>
<rect x="1242.29" y="503.43" width="2.2" height="2.5" fill="#000"/>
<rect x="1242.29" y="506.41" width="2.2" height="2.5" fill="#000"/>
<rect x="1234.88" y="509.39" width="2.2" height="2.5" fill="#000"/>
<rect x="1237.35" y="509.39" width="2.2" height="2.5" fill="#000"/>
<rect x="1242.29" y="509.39" width="2.2" height="2.5" fill="#000"/>
<rect x="1232.41" y="512.37" width="2.2" height="2.5" fill="#000"/>
<rect x="1239.82" y="512.37" width="2.2" height="2.5" fill="#000"/>
<rect x="1242.29" y="512.37" width="2.2" height="2.5" fill="#000"/>
<rect x="1232.41" y="515.35" width="2.2" height="2.5" fill="#000"/>
<rect x="1242.29" y="515.35" width="2.2" height="2.5" fill="#000"/>
<rect x="1232.41" y="518.33" width="2.2" height="2.5" fill="#000"/>
<rect x="1242.29" y="518.33" width="2.2" height="2.5" fill="#000"/>
<rect x="1234.88" y="521.31" width="2.2" height="2.5" fill="#000"/>
<rect x="1237.35" y="521.31" width="2.2" height="2.5" fill="#000"/>
<rect x="1239.82" y="521.31" width="2.2" height="2.5" fill="#000"/>
<rect x="1242.29" y="521.31" width="2.2" height="2.5" fill="#000"/>
<rect x="1249.70" y="506.41" width="2.2" height="2.5" fill="#000"/>
<rect x="1252.17" y="506.41" width="2.2" height="2.5" fill="#000"/>
<rect x="1254.64" y="506.41" width="2.2" height="2.5" fill="#000"/>
<rect x="1257.11" y="506.41" width="2.2" height="2.5" fill="#000"/>
<rect x="1247.23" y="509.39" width="2.2" height="2.5" fill="#000"/>
<rect x="1257.11" y="509.39" width="2.2" height="2.5" fill="#000"/>
<rect x="1247.23" y="512.37" width="2.2" height="2.5" fill="#000"/>
<rect x="1257.11" y="512.37" width="2.2" height="2.5" fill="#000"/>
<rect x="1249.70" y="515.35" width="2.2" height="2.5" fill="#000"/>
<rect x="1252.17" y="515.35" width="2.2" height="2.5" fill="#000"/>
<rect x="1254.64" y="515.35" width="2.2" height="2.5" fill="#000"/>
<rect x="1257.11" y="515.35" width="2.2" height="2.5" fill="#000"/>
<rect x="1257.11" y="518.33" width="2.2" height="2.5" fill="#000"/>
<rect x="1249.70" y="521.31" width="2.2" height="2.5" fill="#000"/>
<rect x="1252.17" y="521.31" width="2.2" height="2.5" fill="#000"/>
<rect x="1254.64" y="521.31" width="2.2" height="2.5" fill="#000"/>
<rect x="1264.52" y="509.39" width="2.2" height="2.5" fill="#000"/>
<rect x="1266.99" y="509.39" width="2.2" height="2.5" fill="#000"/>
<rect x="1269.46" y="509.39" width="2.2" height="2.5" fill="#000"/>
<rect x="1262.05" y="512.37" width="2.2" height="2.5" fill="#000"/>
<rect x="1271.93" y="512.37" width="2.2" height="2.5" fill="#000"/>
<rect x="1262.05" y="515.35" width="2.2" height="2.5" fill="#000"/>
<rect x="1264.52" y="515.35" width="2.2" height="2.5" fill="#000"/>
<rect x="1266.99" y="515.35" width="2.2" height="2.5" fill="#000"/>
<rect x="1269.46" y="515.35" width="2.2" height="2.5" fill="#000"/>
<rect x="1271.93" y="515.35" width="2.2" height="2.5" fill="#000"/>
<rect x="1262.05" y="518.33" width="2.2" height="2.5" fill="#000"/>
<rect x="1264.52" y="521.31" width="2.2" height="2.5" fill="#000"/>
<rect x="1266.99" y="521.31" width="2.2" height="2.5" fill="#000"/>
<rect x="1269.46" y="521.31" width="2.2" height="2.5" fill="#000"/>
<rect x="1281.81" y="503.43" width="2.2" height="2.5" fill="#000"/>
<rect x="1281.81" y="506.41" width="2.2" height="2.5" fill="#000"/>
<rect x="1281.81" y="509.39" width="2.2" height="2.5" fill="#000"/>
<rect x="1281.81" y="512.37" width="2.2" height="2.5" fill="#000"/>
<rect x="1281.81" y="515.35" width="2.2" height="2.5" fill="#000"/>
<rect x="1281.81" y="518.33" width="2.2" height="2.5" fill="#000"/>
<rect x="1281.81" y="521.31" width="2.2" height="2.5" fill="#000"/>
  <path d="M847 451.8V413A4 4 0 0 1 851 409H992.7A4 4 0 0 1 996.7 413V467.9A4 4 0 0 0 1000.7 471.9H1007.5" fill="none" stroke="#ee462a" stroke-width="2.4" stroke-linecap="round" stroke-linejoin="round"/>
<path d="M954 451.5H984.4A4.5 4.5 0 0 1 988.9 456V457A4.5 4.5 0 0 0 993.4 461.4H1007.5" fill="none" stroke="#000" stroke-width="2.4" stroke-linecap="round" stroke-linejoin="round"/>
<path d="M954 472.8H981.3A4.5 4.5 0 0 1 985.8 477.3V488.6A4.5 4.5 0 0 0 990.3 493.1H1007.5" fill="none" stroke="#8f389c" stroke-width="2.4" stroke-linecap="round" stroke-linejoin="round"/>
<path d="M954 504.6H970.5A4.5 4.5 0 0 0 975 500.1V482.4A4.5 4.5 0 0 1 979.5 477.9H1002.7A4.5 4.5 0 0 1 1007.2 482.4V482.6" fill="none" stroke="#3a8c0c" stroke-width="2.4" stroke-linecap="round" stroke-linejoin="round"/>
</svg>
<div id="timer"></div>
<svg class="abs" style="left:1267.6px;top:183.2px" width="23" height="23" viewBox="0 0 24 24"><path d="M15 1H9v2h6V1zm-4 13h2V8h-2v6zm8.03-6.61l1.42-1.42c-.43-.51-.9-.99-1.41-1.41l-1.42 1.42C16.07 4.74 14.12 4 12 4c-4.97 0-9 4.03-9 9s4.02 9 9 9 9-4.03 9-9c0-2.12-.74-4.07-1.97-5.61zM12 20c-3.87 0-7-3.13-7-7s3.13-7 7-7 7 3.13 7 7-3.13 7-7 7z" fill="#000"/></svg>
<div class="abs" style="left:1290.5px;top:186.5px;font-size:16px;line-height:18px;color:#111;letter-spacing:0.1px">00:11.829</div>
<svg class="abs" style="left:1360px;top:180px" width="40" height="30" viewBox="0 0 40 30">
  <path d="M17.09 22.06A8.8 8.8 0 0 1 27.29 7.84M30.82 11.55A8.8 8.8 0 0 1 28.83 22.06" fill="none" stroke="#000" stroke-width="2.2"/>
  <circle cx="22.96" cy="16.10" r="2.9" fill="#000"/>
  <path d="M30.70 8.40L25.01 18.16L20.91 14.04Z" fill="#000"/>
</svg>
<div class="abs" style="left:1395.3px;top:186.5px;font-size:16px;line-height:18px;color:#111;letter-spacing:-1.1px">40%</div>
<div id="serial"><div class="abs" style="left:0;top:0;width:1px;height:169px;background:#c4c4c4"></div><pre>load:0x3fff0030,len:1156
load:0x40078000,len:11456
ho 0 tail 12 room 4
load:0x40080400,len:2972
entry 0x400805dc
...WiFi connected
IP address: 10.10.0.2</pre>
  <div class="abs" style="left:706px;top:0;width:13px;height:169px;background:#f8f8f8;box-shadow:inset 1px 0 1px rgba(0,0,0,0.03)"></div>
  <div class="abs" style="left:719px;top:0;width:1px;height:169px;background:#e4e4e4"></div>
  <div class="abs" style="left:539px;top:16px;width:169.6px;height:145px;background:#eeeeee;box-shadow:-6px 6px 14px rgba(0,0,0,0.07)"></div>
  <div class="abs" style="left:709.5px;top:81px;width:7px;height:83px;border-radius:4px;background:#bcbcbc"></div>
</div>
<div id="input">
  <div class="abs" style="left:0;bottom:0;width:720px;height:1.5px;background:#d0d0d0"></div>
  <div class="btn" style="left:600px;top:-1px"></div>
  <div class="btn" style="left:639.5px;top:-1px"></div>
  <div class="btn" style="left:679.5px;width:41px;top:-1px"></div>
  <svg class="abs" style="left:596px;top:-6px" width="124" height="36" viewBox="1316 864 124 36">
    <path d="M1331.1 874.2V891.2H1350" fill="none" stroke="#1e1e1e" stroke-width="1.7"/>
    <path d="M1331.8 890.4L1338 880L1344 884.3L1349.2 876.1" fill="none" stroke="#1e1e1e" stroke-width="1.6" stroke-linejoin="miter"/>
    <rect x="1374.2" y="876" width="3.7" height="13.9" fill="#1e1e1e"/>
    <rect x="1382.4" y="876" width="3.6" height="13.9" fill="#1e1e1e"/>
    <path d="M1412.1 875.2H1428V877.5H1412.1Z" fill="#1e1e1e"/>
    <path d="M1417 874.3H1423.2V875.5H1417Z" fill="#1e1e1e"/>
    <path d="M1413.4 877.2H1426.8V890.2A1.8 1.8 0 0 1 1425 892H1415.2A1.8 1.8 0 0 1 1413.4 890.2Z" fill="#1e1e1e"/>
    <rect x="1416.8" y="879.4" width="1.8" height="8.6" fill="#f0f0f0"/><rect x="1421.4" y="879.4" width="1.8" height="8.6" fill="#f0f0f0"/>
  </svg>
</div>
</body></html>
